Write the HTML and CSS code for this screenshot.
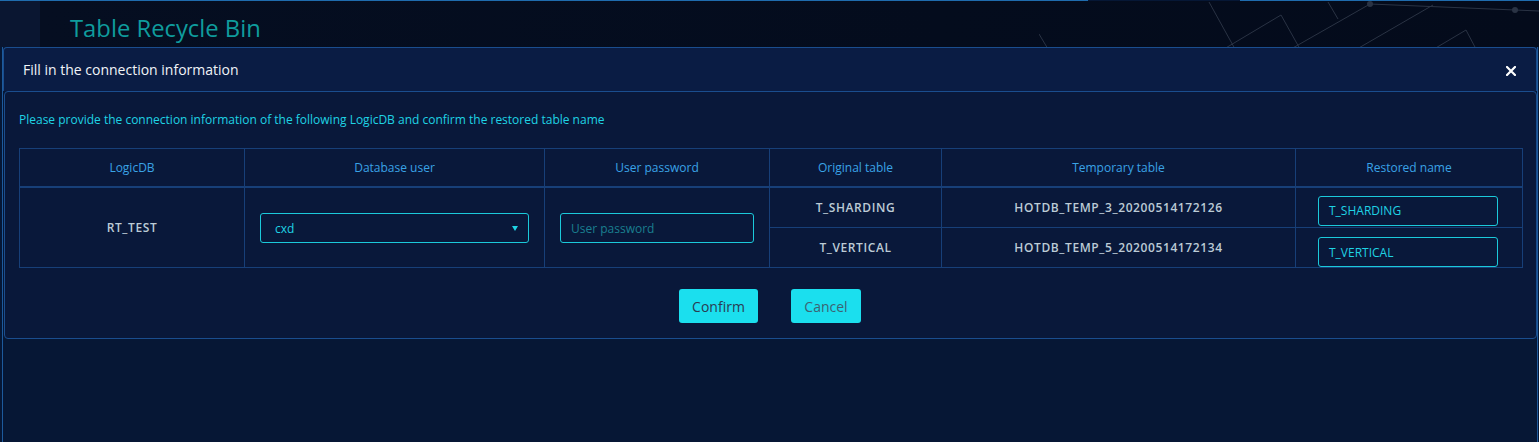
FILE: index.html
```html
<!DOCTYPE html>
<html lang="en">
<head>
<meta charset="utf-8">
<title>Table Recycle Bin</title>
<link rel="stylesheet" href="styles.css">
</head>
<body>
<div class="page">
  <div class="topline"></div>
  <div class="topbar">
    <div class="rail"></div>
    <div class="banner">
      <svg class="deco" width="500" height="46" viewBox="0 -1 500 46">
        <g stroke="#2a3344" stroke-width="1" fill="none">
          <polyline points="0,32 9,47"/>
          <polyline points="170,0 196,47"/>
          <polyline points="185,47 242,13 261,47"/>
          <polyline points="252,47 331,2"/>
          <polyline points="289,0 299,17"/>
          <polyline points="318,47 394,3"/>
          <polyline points="395,47 427,28 437,47"/>
          <polyline points="331,2 476,8 500,9"/>
        </g>
        <circle cx="331" cy="2" r="3" fill="#2a3344"/>
        <circle cx="476" cy="8" r="3" fill="#2a3344"/>
      </svg>
      <h1 class="title">Table Recycle Bin</h1>
    </div>
  </div>
  <div class="panel"></div>
</div>

<div class="modal">
  <div class="modal-head">
    <span class="modal-title">Fill in the connection information</span>
    <button class="close" type="button" aria-label="Close">
      <svg width="10" height="10" viewBox="0 0 10 10"><path d="M1 1 L9 9 M9 1 L1 9" stroke="#ffffff" stroke-width="2.2" stroke-linecap="square"/></svg>
    </button>
  </div>
  <div class="modal-body">
    <p class="hint">Please provide the connection information of the following LogicDB and confirm the restored table name</p>
    <table class="grid">
      <colgroup>
        <col style="width:225px"><col style="width:300px"><col style="width:225px"><col style="width:172px"><col style="width:354px"><col style="width:227px">
      </colgroup>
      <thead>
        <tr>
          <th>LogicDB</th><th>Database user</th><th>User password</th><th>Original table</th><th>Temporary table</th><th>Restored name</th>
        </tr>
      </thead>
      <tbody>
        <tr class="r1">
          <td rowspan="2" class="val">RT_TEST</td>
          <td rowspan="2" class="ctl"><div class="select"><span>cxd</span><i class="caret"></i></div></td>
          <td rowspan="2" class="ctl"><div class="input placeholder">User password</div></td>
          <td class="val">T_SHARDING</td>
          <td class="val">HOTDB_TEMP_3_20200514172126</td>
          <td class="namecell"><div class="input name">T_SHARDING</div></td>
        </tr>
        <tr class="r2">
          <td class="val">T_VERTICAL</td>
          <td class="val">HOTDB_TEMP_5_20200514172134</td>
          <td class="namecell"><div class="input name">T_VERTICAL</div></td>
        </tr>
      </tbody>
    </table>
    <div class="actions">
      <button class="btn confirm" type="button">Confirm</button>
      <button class="btn cancel" type="button">Cancel</button>
    </div>
  </div>
</div>
</body>
</html>
```
FILE: styles.css
```css
* { box-sizing: border-box; }
html, body { margin: 0; padding: 0; }
body {
  width: 1539px;
  height: 442px;
  overflow: hidden;
  background: #061735;
  font-family: "Open Sans", "Liberation Sans", sans-serif;
  position: relative;
}
.page {
  display: flex;
  flex-direction: column;
  height: 442px;
}
.topline {
  height: 1px;
  background: linear-gradient(90deg, #1f6cae 0, #1f6cae 1088px, transparent 1088px, transparent 1240px, #1f6cae 1240px);
}
.topbar {
  display: flex;
  height: 46px;
}
.rail {
  width: 40px;
  background: #0a1631;
}
.banner {
  flex: 1;
  position: relative;
  background: linear-gradient(90deg, #050e21 0%, #040c1d 60%, #040b1b 100%);
}
.deco {
  position: absolute;
  right: 0;
  top: 0;
}
.title {
  margin: 0;
  padding: 10px 0 0 30px;
  font-weight: 400;
  font-size: 23.8px;
  line-height: 34px;
  color: #0f9c9d;
  position: relative;
}
.panel {
  flex: 1;
  margin: 0 1px 0 2px;
  border-left: 1px solid #1d5a9c;
  border-right: 1px solid #1d5a9c;
}

.modal {
  position: absolute;
  left: 3px;
  top: 47px;
  width: 1534px;
}
.modal-head {
  height: 44px;
  background: #0a1c44;
  border: 1px solid #1a4d8e;
  border-bottom: none;
  border-radius: 4px 4px 0 0;
  display: flex;
  align-items: center;
  justify-content: space-between;
  padding: 0 20px 0 19px;
}
.modal-title {
  color: #f0f4f8;
  font-size: 14px;
  line-height: 20px;
  margin-top: 1px;
}
.close {
  background: none;
  border: none;
  padding: 0;
  width: 10px;
  height: 10px;
  display: flex;
  margin-top: 2px;
}
.modal-body {
  margin-left: 1px;
  background: #09183a;
  border: 1px solid #1a4d8e;
  border-radius: 4px;
  padding: 19px 15px 15px 14px;
}
.hint {
  margin: 0 0 19px 0;
  font-size: 12px;
  line-height: 18px;
  color: #1fd3e4;
}
.grid {
  width: 1503px;
  border-collapse: collapse;
  table-layout: fixed;
}
.grid th, .grid td {
  border: 1px solid #173f78;
  text-align: center;
  font-size: 12px;
  padding: 0;
}
.grid th {
  height: 38px;
  color: #3aa3e6;
  font-weight: 400;
  border-bottom: 2px solid #173f78;
}
.grid tr.r1 td { height: 41px; }
.grid tr.r2 td { height: 40px; }
.grid td.ctl { padding-top: 2px; }
.grid td.namecell { vertical-align: top; padding-top: 8px; }
.grid tr.r2 td.namecell { padding-top: 9px; }
.val {
  color: #bccbd6;
  font-weight: 600;
  letter-spacing: 0.6px;
}
.select, .input {
  height: 30px;
  border: 1px solid #1bc9da;
  border-radius: 3px;
  display: flex;
  align-items: center;
  padding: 0 10px 0 14px;
  text-align: left;
  font-size: 12px;
  color: #1fd3e4;
}
.select {
  margin: 0 15px;
  justify-content: space-between;
}
.caret {
  width: 0;
  height: 0;
  border-left: 3px solid transparent;
  border-right: 3px solid transparent;
  border-top: 5px solid #1fd3e4;
}
.input { margin: 0 15px; padding-left: 10px; }
.placeholder { color: #1a7f8f; }
.name { margin: 0 22px; width: 180px; height: 30px; }

.actions {
  display: flex;
  justify-content: center;
  gap: 33px;
  margin-top: 21px;
}
.btn {
  height: 34px;
  border: none;
  border-radius: 3px;
  background: #1bdfee;
  font-family: "Open Sans", "Liberation Sans", sans-serif;
  font-size: 14px;
  padding: 0;
}
.confirm { width: 79px; color: #2a3c52; }
.cancel { width: 70px; color: #3d6373; }
```
